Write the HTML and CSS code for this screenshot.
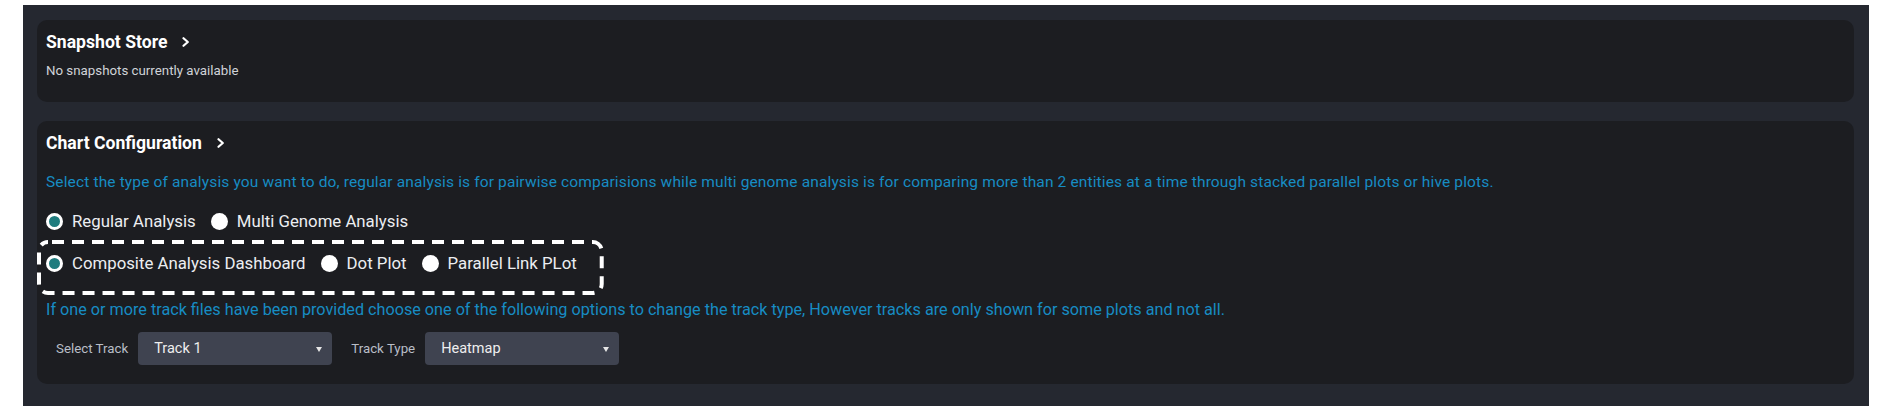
FILE: index.html
```html
<!DOCTYPE html>
<html lang="en">
<head>
<meta charset="utf-8">
<title>Chart Configuration</title>
<link rel="stylesheet" href="styles.css">
</head>
<body>
<div class="shell">
  <section class="card card-snapshot">
    <h2 class="card-title">Snapshot Store
      <svg class="chev" width="8" height="10" viewBox="0 0 8 10" aria-hidden="true"><polyline points="1.5,1.2 5.8,5 1.5,8.8" fill="none" stroke="#ffffff" stroke-width="2.2" stroke-linecap="round" stroke-linejoin="round"/></svg>
    </h2>
    <p class="muted">No snapshots currently available</p>
  </section>

  <section class="card card-config">
    <h2 class="card-title">Chart Configuration
      <svg class="chev" width="8" height="10" viewBox="0 0 8 10" aria-hidden="true"><polyline points="1.5,1.2 5.8,5 1.5,8.8" fill="none" stroke="#ffffff" stroke-width="2.2" stroke-linecap="round" stroke-linejoin="round"/></svg>
    </h2>
    <p class="info info-first">Select the type of analysis you want to do, regular analysis is for pairwise comparisions while multi genome analysis is for comparing more than 2 entities at a time through stacked parallel plots or hive plots.</p>

    <div class="radio-row">
      <label class="radio"><input type="radio" name="analysis" checked><span>Regular Analysis</span></label>
      <label class="radio"><input type="radio" name="analysis"><span>Multi Genome Analysis</span></label>
    </div>

    <div class="radio-row highlight">
      <label class="radio"><input type="radio" name="plot" checked><span>Composite Analysis Dashboard</span></label>
      <label class="radio"><input type="radio" name="plot"><span>Dot Plot</span></label>
      <label class="radio"><input type="radio" name="plot"><span>Parallel Link PLot</span></label>
      <svg class="dash-frame" aria-hidden="true"><rect class="dash-rect" rx="9" ry="9"/></svg>
    </div>

    <p class="info info-second">If one or more track files have been provided choose one of the following options to change the track type, However tracks are only shown for some plots and not all.</p>

    <div class="select-row">
      <span class="field-label">Select Track</span>
      <div class="select-wrap">
        <select class="select"><option>Track 1</option></select>
      </div>
      <span class="field-label field-label-gap">Track Type</span>
      <div class="select-wrap">
        <select class="select"><option>Heatmap</option></select>
      </div>
    </div>
  </section>
</div>
</body>
</html>
```

FILE: styles.css
```css
html, body {
  margin: 0;
  padding: 0;
  background: #ffffff;
}

body {
  font-family: Roboto, "Liberation Sans", Arial, sans-serif;
}

.shell {
  margin: 5px 20px 5px 23px;
  padding: 15px 15px 22px 14px;
  background: #252830;
  display: flex;
  flex-direction: column;
  gap: 19px;
}

.card {
  background: #1c1d21;
  border-radius: 10px;
  padding: 12px 9px 0 9px;
}

.card-snapshot {
  padding-bottom: 22px;
}

.card-config {
  padding-bottom: 19px;
}

.card-title {
  margin: 0;
  font-size: 17.6px;
  line-height: 20px;
  font-weight: 700;
  color: #ffffff;
  display: flex;
  align-items: center;
}

.chev {
  display: block;
  margin-left: 15px;
  margin-top: -1px;
}

.muted {
  margin: 10px 0 0 0;
  font-size: 13.3px;
  line-height: 18px;
  color: #d0d3d8;
}

.info {
  margin: 0;
  font-size: 15.5px;
  line-height: 20px;
  color: #178cc3;
}

.info-first {
  margin-top: 19px;
  letter-spacing: 0.14px;
}

.info-second {
  margin-top: 5px;
  font-size: 16.2px;
}

.radio-row {
  display: flex;
  align-items: center;
  gap: 15px;
  height: 24px;
  margin-top: 17px;
}

.radio {
  display: inline-flex;
  align-items: center;
  gap: 9px;
  font-size: 16.8px;
  line-height: 24px;
  color: #eceef1;
  cursor: pointer;
}

.radio input {
  appearance: none;
  -webkit-appearance: none;
  margin: 0;
  width: 17px;
  height: 17px;
  border-radius: 50%;
  background: #ffffff;
  flex: none;
}

.radio input:checked {
  background: #1f7c7e;
  border: 3px solid #ffffff;
}

.highlight {
  position: relative;
  width: fit-content;
  height: auto;
  margin-top: 7px;
  margin-left: -9px;
  padding: 11px 27px 20px 9px;
}

.dash-frame {
  position: absolute;
  left: 0;
  top: 0;
  width: 100%;
  height: 100%;
  overflow: visible;
  pointer-events: none;
}

.dash-rect {
  x: 2px;
  y: 2px;
  width: calc(100% - 4px);
  height: calc(100% - 4px);
  fill: none;
  stroke: #ffffff;
  stroke-width: 4;
  stroke-dasharray: 12 8;
  stroke-dashoffset: -4;
}

.select-row {
  display: flex;
  align-items: center;
  margin-top: 12px;
  padding-left: 10px;
}

.field-label {
  font-size: 13.3px;
  color: #b9bec7;
  margin-right: 10px;
}

.field-label-gap {
  margin-left: 19px;
}

.select-wrap {
  position: relative;
  width: 194px;
}

.select-wrap::after {
  content: "";
  position: absolute;
  right: 10px;
  top: 15px;
  border-left: 3px solid transparent;
  border-right: 3px solid transparent;
  border-top: 5px solid #e6e6e6;
  pointer-events: none;
}

.select {
  appearance: none;
  -webkit-appearance: none;
  width: 100%;
  height: 33px;
  border: none;
  border-radius: 4px;
  background: #3f4350;
  color: #eeeeee;
  font-family: Roboto, "Liberation Sans", Arial, sans-serif;
  font-size: 14.5px;
  padding: 0 24px 0 16px;
  outline: none;
}
```
